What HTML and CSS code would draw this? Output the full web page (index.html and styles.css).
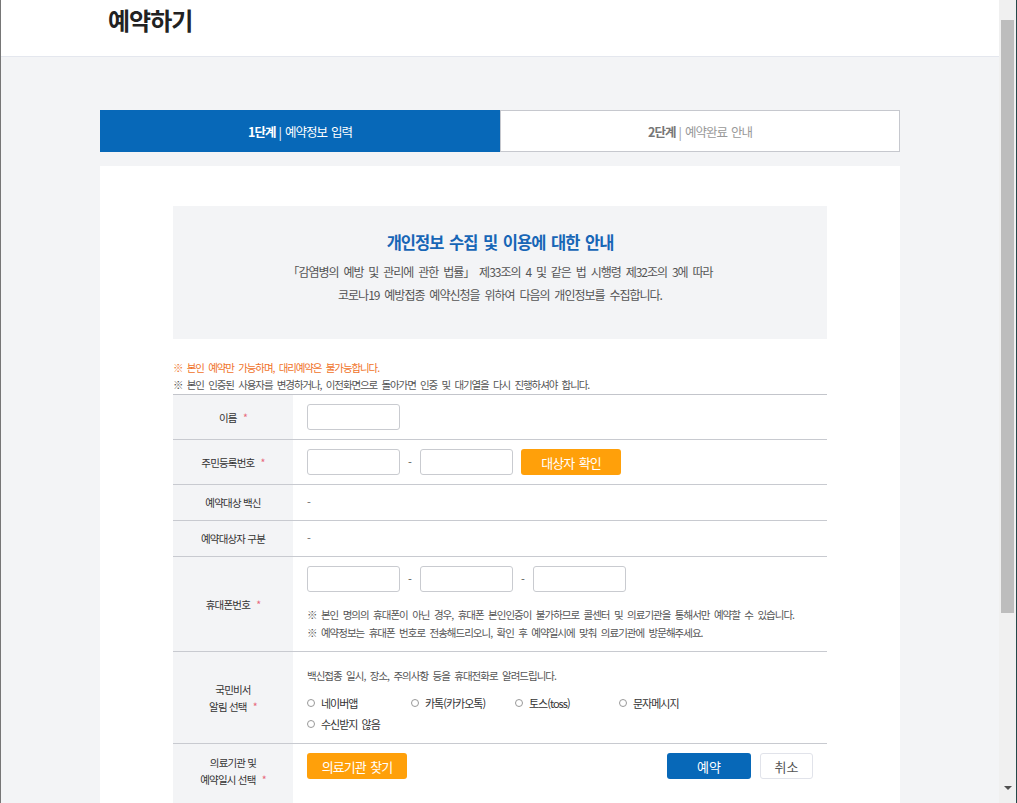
FILE: index.html
```html
<!DOCTYPE html>
<html lang="ko">
<head>
  <meta charset="UTF-8" />
  <meta name="viewport" content="width=device-width, initial-scale=1.0" />
  <title>예약하기</title>
  <link rel="stylesheet" href="styles.css">
</head>
<body>

  <div class="frame">
    <div class="page">
      <div class="top">
        <div class="top-inner">
          <h1>예약하기</h1>
        </div>
      </div>

      <div class="content">
        <ul class="steps">
          <li class="on"><b>1단계</b> | 예약정보 입력</li>
          <li><b>2단계</b> | 예약완료 안내</li>
        </ul>

        <div class="box">
          <div class="agree">
            <h2>개인정보 수집 및 이용에 대한 안내</h2>
            <p>「감염병의 예방 및 관리에 관한 법률」 제33조의 4 및 같은 법 시행령 제32조의 3에 따라<br>코로나19 예방접종 예약신청을 위하여 다음의 개인정보를 수집합니다.</p>
          </div>

          <p class="notice warn">※ 본인 예약만 가능하며, 대리예약은 불가능합니다.</p>
          <p class="notice">※ 본인 인증된 사용자를 변경하거나, 이전화면으로 돌아가면 인증 및 대기열을 다시 진행하셔야 합니다.</p>

          <div class="form">
            <div class="row">
              <div class="th"><span>이름 <em>*</em></span></div>
              <div class="td line"><input type="text" class="ipt"></div>
            </div>
            <div class="row">
              <div class="th"><span>주민등록번호 <em>*</em></span></div>
              <div class="td line">
                <input type="text" class="ipt"><span class="dash">-</span><input type="password" class="ipt">
                <button class="btn-orange">대상자 확인</button>
              </div>
            </div>
            <div class="row">
              <div class="th"><span>예약대상 백신</span></div>
              <div class="td text">-</div>
            </div>
            <div class="row">
              <div class="th"><span>예약대상자 구분</span></div>
              <div class="td text">-</div>
            </div>
            <div class="row">
              <div class="th"><span>휴대폰번호 <em>*</em></span></div>
              <div class="td">
                <div class="line">
                  <input type="text" class="ipt"><span class="dash">-</span><input type="text" class="ipt"><span class="dash">-</span><input type="text" class="ipt">
                </div>
                <ul class="help">
                  <li>※ 본인 명의의 휴대폰이 아닌 경우, 휴대폰 본인인증이 불가하므로 콜센터 및 의료기관을 통해서만 예약할 수 있습니다.</li>
                  <li>※ 예약정보는 휴대폰 번호로 전송해드리오니, 확인 후 예약일시에 맞춰 의료기관에 방문해주세요.</li>
                </ul>
              </div>
            </div>
            <div class="row">
              <div class="th"><span>국민비서<br>알림 선택 <em>*</em></span></div>
              <div class="td">
                <p class="desc">백신접종 일시, 장소, 주의사항 등을 휴대전화로 알려드립니다.</p>
                <div class="radios">
                  <label><span class="dot"></span>네이버앱</label>
                  <label><span class="dot"></span>카톡(카카오톡)</label>
                  <label><span class="dot"></span>토스(toss)</label>
                  <label><span class="dot"></span>문자메시지</label>
                  <label><span class="dot"></span>수신받지 않음</label>
                </div>
              </div>
            </div>
            <div class="row last">
              <div class="th"><span>의료기관 및<br>예약일시 선택 <em>*</em></span></div>
              <div class="td actions">
                <button class="btn-orange">의료기관 찾기</button>
                <div class="btns">
                  <button class="btn-blue">예약</button>
                  <button class="btn-line">취소</button>
                </div>
              </div>
            </div>
          </div>
        </div>
      </div>
    </div>

    <div class="scrollbar">
      <div class="thumb"></div>
      <div class="arrow"></div>
    </div>
  </div>

</body>
</html>
```

FILE: styles.css
```css
* {
  box-sizing: border-box;
  margin: 0;
  padding: 0;
}
html, body {
  height: 803px;
  overflow: hidden;
}
body {
  font-family: "Noto Sans CJK KR", "Noto Sans", sans-serif;
  color: #333;
  background-color: #f3f4f6;
}
ul {
  list-style: none;
}
.frame {
  display: flex;
  height: 803px;
  border-left: 1px solid #767676;
  border-right: 1px solid #24494a;
}
.page {
  flex: 1;
  overflow: hidden;
  background-color: #f3f4f6;
}
.top {
  background-color: #fff;
  border-bottom: 1px solid #e4e7ee;
  height: 57px;
}
.top-inner {
  width: 800px;
  margin: 0 auto;
  padding: 4px 8px 0;
}
.top h1 {
  font-size: 24px;
  line-height: 32px;
  font-weight: 700;
  letter-spacing: -1px;
  color: #222;
}
.content {
  width: 800px;
  margin: 53px auto 0;
}
.steps {
  display: flex;
  height: 42px;
}
.steps li {
  flex: 1;
  display: flex;
  align-items: center;
  justify-content: center;
  gap: 3px;
  font-size: 12.5px;
  letter-spacing: -1px;
  word-spacing: 1.5px;
  color: #999;
  background-color: #fff;
  border: 1px solid #c6c8ce;
}
.steps li b {
  color: #777;
  font-weight: 700;
}
.steps li.on {
  background-color: #0768b8;
  border-color: #0768b8;
  color: #fff;
}
.steps li.on b {
  color: #fff;
}
.box {
  margin-top: 14px;
  background-color: #fff;
  padding: 40px 73px 0;
  height: 700px;
}
.agree {
  background-color: #f3f4f6;
  padding: 24px 20px 33px;
  text-align: center;
}
.agree h2 {
  font-size: 16.5px;
  line-height: 24px;
  font-weight: 700;
  letter-spacing: -1px;
  word-spacing: 2px;
  color: #1766b6;
}
.agree p {
  margin-top: 6px;
  font-size: 12px;
  line-height: 23px;
  letter-spacing: -1px;
  word-spacing: 2.5px;
  color: #555;
}
.notice {
  font-size: 10.5px;
  line-height: 17px;
  letter-spacing: -1.1px;
  word-spacing: 2.5px;
  color: #555;
}
.notice.warn {
  margin-top: 20px;
  color: #f0732a;
}
.form {
  margin-top: 1px;
  border-top: 1px solid #c3c5cb;
}
.row {
  display: grid;
  grid-template-columns: 120px 1fr;
  border-bottom: 1px solid #c8cad0;
}
.th {
  display: flex;
  align-items: center;
  justify-content: center;
  text-align: center;
  background-color: #f3f4f6;
  font-size: 10.5px;
  line-height: 17px;
  letter-spacing: -0.8px;
  color: #333;
}
.th em {
  font-style: normal;
  color: #e8687c;
  margin-left: 4px;
}
.td {
  padding: 9px 14px;
  min-width: 0;
}
.td.text {
  font-size: 11px;
  line-height: 17px;
  color: #666;
}
.line {
  display: flex;
  align-items: center;
}
.ipt {
  width: 93px;
  height: 26px;
  border: 1px solid #c9cbd0;
  border-radius: 3px;
  background: #fff;
}
.dash {
  width: 20px;
  text-align: center;
  font-size: 11px;
  color: #555;
}
.btn-orange {
  width: 100px;
  height: 26px;
  border: none;
  border-radius: 3px;
  background-color: #ffa00a;
  color: #fff;
  font-family: inherit;
  font-size: 13px;
  letter-spacing: -1px;
  word-spacing: 2px;
}
.line .btn-orange {
  margin-left: 8px;
}
.help {
  margin-top: 14px;
}
.help li,
.desc {
  font-size: 10.5px;
  line-height: 18px;
  letter-spacing: -1px;
  word-spacing: 2.5px;
  color: #555;
}
.desc {
  margin-top: 6px;
}
.radios {
  display: flex;
  flex-wrap: wrap;
  width: 420px;
  margin-top: 7px;
}
.radios label {
  width: 104px;
  height: 21px;
  display: flex;
  align-items: center;
  gap: 6px;
  font-size: 11px;
  letter-spacing: -1px;
  word-spacing: 2px;
  color: #333;
}
.dot {
  width: 8px;
  height: 8px;
  border: 1px solid #999;
  border-radius: 50%;
  background: #fff;
}
.row.last .th {
  align-items: flex-start;
  padding-top: 10px;
}
.row.last .td {
  padding-bottom: 40px;
}
.actions {
  display: flex;
  justify-content: space-between;
  align-items: flex-start;
}
.btns {
  display: flex;
  gap: 9px;
}
.btn-blue {
  width: 84px;
  height: 26px;
  border: none;
  border-radius: 3px;
  background-color: #0768b8;
  color: #fff;
  font-family: inherit;
  font-size: 13px;
}
.btn-line {
  width: 53px;
  height: 26px;
  border: 1px solid #e1e3ea;
  border-radius: 3px;
  background-color: #fff;
  color: #555;
  font-family: inherit;
  font-size: 13px;
}
.scrollbar {
  width: 17px;
  display: flex;
  flex-direction: column;
  align-items: center;
  padding-top: 20px;
  background-color: #f0f0f0;
}
.thumb {
  width: 13px;
  height: 593px;
  background-color: #bdbdbd;
}
.arrow {
  margin-top: auto;
  margin-bottom: 13px;
  border-left: 4px solid transparent;
  border-right: 4px solid transparent;
  border-top: 4px solid #505050;
}
```
